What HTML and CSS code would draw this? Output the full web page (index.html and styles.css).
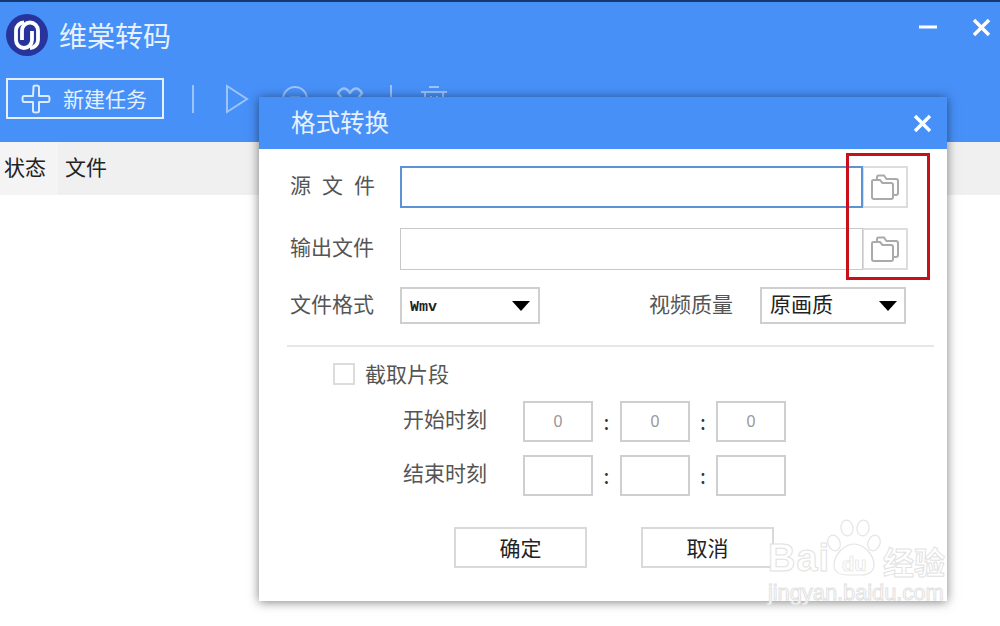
FILE: index.html
```html
<!DOCTYPE html>
<html lang="zh-CN">
<head>
<meta charset="utf-8">
<title>维棠转码</title>
<link rel="stylesheet" href="styles.css">
</head>
<body>
<div class="app">
  <header class="topbar">
    <div class="titlerow">
      <svg class="logo" viewBox="0 0 42 42" width="42" height="42">
        <circle cx="21" cy="21" r="21" fill="#27349c"/>
        <path d="M18 8.500 A8 8 0 0 0 10 16.500 V26 A8 8 0 0 0 26 26 V17" fill="none" stroke="#fff" stroke-width="3.800"/>
        <path d="M24 34 A8 8 0 0 0 32 26 V16.500 A8 8 0 0 0 16 16.500 V26" fill="none" stroke="#fff" stroke-width="3.800"/>
      </svg>
      <span class="apptitle">维棠转码</span>
      <div class="winbtns">
        <svg width="19" height="19" viewBox="0 0 19 19"><path d="M0 9 H18" stroke="#fff" stroke-width="3"/></svg>
        <svg width="19" height="19" viewBox="0 0 19 19"><path d="M2 2 L17 17 M17 2 L2 17" stroke="#fff" stroke-width="3.400"/></svg>
      </div>
    </div>
    <div class="toolbar">
      <button class="newtask">
        <svg width="30" height="30" viewBox="0 0 30 30"><path d="M12.500 3 Q12 1.500 15 1.500 Q18 1.500 18 3 V12 H27 Q28.500 12 28.500 15 Q28.500 18 27 18 H18 V27 Q18 28.500 15 28.500 Q12 28.500 12 27 V18 H3 Q1.500 18 1.500 15 Q1.500 12 3 12 H12 Z" fill="none" stroke="#dcebff" stroke-width="2" stroke-linejoin="round"/></svg>
        <span>新建任务</span>
      </button>
      <i class="sep"></i>
      <svg class="tool" width="24" height="30" viewBox="0 0 24 30"><path d="M2 2 L22 15 L2 28 Z" fill="none" stroke="#9cc3fa" stroke-width="2"/></svg>
      <svg class="tool t2" width="28" height="28" viewBox="0 0 28 28"><circle cx="14" cy="14" r="12" fill="none" stroke="#9cc3fa" stroke-width="2"/><path d="M9 13 H19" stroke="#9cc3fa" stroke-width="3"/></svg>
      <svg class="tool t3" width="28" height="28" viewBox="0 0 28 28"><path d="M2 8 Q8 -1 14 8 Q20 -1 26 8 L14 24 Z" fill="none" stroke="#9cc3fa" stroke-width="2.400" stroke-linejoin="round"/></svg>
      <i class="sep sep2"></i>
      <svg class="tool t4" width="28" height="28" viewBox="0 0 28 28"><path d="M1 7 H27 M9 2 H19 M5 7 V27 H23 V7 M11 11 V22 M17 11 V22" fill="none" stroke="#9cc3fa" stroke-width="2"/></svg>
    </div>
  </header>
  <div class="tablehead">
    <span class="col-state">状态</span>
    <span class="col-file">文件</span>
  </div>
</div>

<section class="dialog">
  <div class="dlghead">
    <span>格式转换</span>
    <svg width="19" height="19" viewBox="0 0 19 19"><path d="M2 2 L17 17 M17 2 L2 17" stroke="#fff" stroke-width="3.400"/></svg>
  </div>
  <div class="dlgbody">
    <div class="filerow">
      <label class="lab spaced">源文件</label>
      <div class="field focus"></div>
      <button class="browse">
        <svg width="30" height="30" viewBox="0 0 30 30"><path d="M7 8 V5 Q7 3.500 8.500 3.500 H14 L16.500 7 H26 Q28 7 28 9 V21 Q28 23 26 23 H24 M2 12 V9.500 Q2 8 3.500 8 H10 L12.500 11 H21 Q23 11 23 13 V25 Q23 27 21 27 H4 Q2 27 2 25 Z" fill="none" stroke="#aaa" stroke-width="2"/></svg>
      </button>
    </div>
    <div class="filerow">
      <label class="lab">输出文件</label>
      <div class="field"></div>
      <button class="browse">
        <svg width="30" height="30" viewBox="0 0 30 30"><path d="M7 8 V5 Q7 3.500 8.500 3.500 H14 L16.500 7 H26 Q28 7 28 9 V21 Q28 23 26 23 H24 M2 12 V9.500 Q2 8 3.500 8 H10 L12.500 11 H21 Q23 11 23 13 V25 Q23 27 21 27 H4 Q2 27 2 25 Z" fill="none" stroke="#aaa" stroke-width="2"/></svg>
      </button>
    </div>
    <div class="formatrow">
      <label class="lab">文件格式</label>
      <div class="select sel1"><span class="mono">Wmv</span><i class="caret"></i></div>
      <label class="lab quality">视频质量</label>
      <div class="select sel2"><span>原画质</span><i class="caret"></i></div>
    </div>
    <hr class="divider">
    <div class="cliprow">
      <i class="check"></i>
      <span class="lab">截取片段</span>
    </div>
    <div class="timerow">
      <label class="lab">开始时刻</label>
      <div class="tbox">0</div><b>:</b><div class="tbox">0</div><b class="narrow">:</b><div class="tbox">0</div>
    </div>
    <div class="timerow second">
      <label class="lab">结束时刻</label>
      <div class="tbox"></div><b>:</b><div class="tbox"></div><b class="narrow">:</b><div class="tbox"></div>
    </div>
    <div class="actions">
      <button class="act">确定</button>
      <button class="act">取消</button>
    </div>
  </div>
</section>

<div class="redmark"></div>

<div class="watermark">
  <div class="wm-top">
    <span class="wm-bai">Bai</span>
    <svg class="paw" width="54" height="58" viewBox="0 0 54 58">
      <g fill="#fff" stroke="#e4e4e4" stroke-width="1.200">
        <ellipse cx="7" cy="24" rx="6" ry="8" transform="rotate(-20 7 24)"/>
        <ellipse cx="20" cy="9" rx="6" ry="8" transform="rotate(-8 20 9)"/>
        <ellipse cx="36" cy="9" rx="6" ry="8" transform="rotate(8 36 9)"/>
        <ellipse cx="47" cy="24" rx="6" ry="8" transform="rotate(20 47 24)"/>
        <path d="M27 25 C17 25 7 36 7 46 C7 53 13 56 20 56 H34 C42 56 47 52 47 46 C47 36 37 25 27 25 Z"/>
      </g>
    </svg>
    <span class="wm-du">du</span>
    <span class="wm-cn">经验</span>
  </div>
  <div class="wm-url">jingyan.baidu.com</div>
</div>
</body>
</html>
```

FILE: styles.css
```css
* { box-sizing: border-box; }
html, body { margin: 0; padding: 0; }
body {
  width: 1000px;
  height: 626px;
  overflow: hidden;
  background: #fff;
  font-family: "Noto Sans CJK SC", "Liberation Sans", sans-serif;
  position: relative;
}
button { font-family: inherit; padding: 0; background: none; }

.topbar {
  height: 142px;
  background: #4790f8;
  border-top: 2px solid #14386f;
  padding: 12px 0 0 6px;
  color: #fff;
}
.titlerow { display: flex; align-items: center; height: 42px; }
.logo { flex: none; }
.apptitle { margin-left: 11px; font-size: 28px; line-height: 42px; color: #e6f0ff; }
.winbtns { margin-left: auto; display: flex; gap: 34px; padding-right: 9px; margin-top: -16px; }

.toolbar { display: flex; align-items: center; margin-top: 22px; height: 41px; position: relative; }
.newtask {
  width: 158px;
  height: 41px;
  border: 2px solid #e4efff;
  display: flex;
  align-items: center;
  gap: 12px;
  padding: 0 0 2px 13px;
  color: #e6f0ff;
  font-size: 21px;
}
.newtask svg { flex: none; margin-top: 2px; }
.sep { display: block; width: 2px; height: 28px; background: #9cc3fa; margin-left: 28px; }
.tool { flex: none; margin-left: 31px; }
.t2 { margin-left: 32px; }
.t3 { margin-left: 27px; }
.sep2 { margin-left: 26px; }
.t4 { margin-left: 28px; }

.tablehead {
  height: 53px;
  background: #f0f0f0;
  display: flex;
  font-size: 21px;
  color: #222;
}
.col-state { width: 58px; padding-left: 4px; background: #f4f4f4; height: 53px; line-height: 49px; }
.col-file { padding-left: 7px; height: 53px; line-height: 49px; }

.dialog {
  position: absolute;
  left: 259px;
  top: 97px;
  width: 688px;
  height: 504px;
  background: #fff;
  box-shadow: 0 1px 10px rgba(0, 0, 0, .5);
}
.dlghead {
  height: 52px;
  background: #4790f8;
  display: flex;
  align-items: center;
  justify-content: space-between;
  padding: 0 15px 0 32px;
  color: #e6f0ff;
  font-size: 24.500px;
}
.dlghead span { padding-bottom: 3px; }
.dlgbody { padding: 17px 13px 0 31px; }
.lab { font-size: 21px; color: #555; line-height: 30px; white-space: nowrap; }
.spaced { letter-spacing: 11px; }

.filerow { display: flex; align-items: center; height: 42px; margin-bottom: 20px; }
.filerow .lab { width: 110px; flex: none; padding-bottom: 6px; height: 36px; }
.field { width: 463px; height: 42px; border: 1px solid #c8c8c8; background: #fff; }
.field.focus { border: 2px solid #5b93d6; }
.browse {
  width: 45px;
  height: 42px;
  border: 2px solid #dcdcdc;
  border-left-width: 1px;
  display: flex;
  align-items: center;
  justify-content: center;
}

.formatrow { display: flex; align-items: center; height: 37px; margin-top: -3px; }
.formatrow .lab { width: 110px; flex: none; height: 36px; padding-bottom: 6px; }
.formatrow .quality { width: 111px; margin-left: 109px; }
.select {
  height: 37px;
  border: 2px solid #cfcfcf;
  display: flex;
  align-items: center;
  justify-content: space-between;
  padding: 0 7px 0 8px;
  color: #222;
  font-size: 21px;
}
.sel1 { width: 140px; }
.sel2 { width: 146px; }
.sel2 span { padding-bottom: 5px; }
.mono { font-family: "Liberation Mono", monospace; font-size: 15px; font-weight: bold; padding-top: 3px; }
.caret {
  display: block;
  border-left: 9px solid transparent;
  border-right: 9px solid transparent;
  border-top: 10px solid #000;
}
.sel1 .caret { margin-right: 1px; }

.divider { border: 0; border-top: 2px solid #e6e6e6; margin: 21px 0 0 -3px; width: 647px; }
.cliprow { display: flex; align-items: center; height: 22px; margin: 16px 0 0 43px; }
.cliprow .lab { height: 32px; padding-bottom: 2px; }
.check { display: block; width: 22px; height: 22px; border: 2px solid #dcdcdc; margin-right: 10px; }
.timerow { display: flex; align-items: center; height: 41px; margin: 16px 0 0 113px; }
.timerow.second { margin-top: 13px; }
.timerow .lab { width: 120px; flex: none; height: 38px; padding-bottom: 8px; }
.tbox {
  width: 70px;
  height: 41px;
  border: 2px solid #cfcfcf;
  display: flex;
  align-items: center;
  justify-content: center;
  color: #999;
  font-size: 16px;
  font-family: "Liberation Sans", sans-serif;
}
.timerow b { width: 27px; text-align: center; font-size: 21px; color: #333; line-height: 41px; font-weight: normal; }
.timerow b.narrow { width: 26px; }
.actions { display: flex; gap: 54px; margin: 31px 0 0 164px; }
.act {
  width: 133px;
  height: 41px;
  border: 2px solid #d9d9d9;
  font-size: 21px;
  color: #222;
  background: #fff;
  padding-bottom: 2px;
}

.redmark {
  position: absolute;
  left: 846px;
  top: 153px;
  width: 84px;
  height: 127px;
  border: 3px solid #c8101c;
}

.watermark { position: absolute; left: 768px; top: 519px; width: 180px; }
.wm-top { position: relative; height: 60px; }
.wm-bai, .wm-du, .wm-cn, .wm-url {
  color: #fff;
  -webkit-text-stroke: 1px #e2e2e2;
  font-family: "Liberation Sans", sans-serif;
  font-weight: bold;
  position: absolute;
}
.wm-bai { left: 0; top: 17px; font-size: 38px; line-height: 44px; letter-spacing: 1px; }
.paw { position: absolute; left: 59px; top: 0; }
.wm-du { left: 74px; top: 33px; font-size: 20px; line-height: 24px; -webkit-text-stroke-width: .7px; }
.wm-cn { left: 115px; top: 26px; font-size: 31px; line-height: 32px; font-family: "Noto Sans CJK SC", sans-serif; }
.wm-url { top: 63px; left: 0; font-size: 22px; line-height: 22px; font-weight: normal; white-space: nowrap; letter-spacing: -.1px; }
```
